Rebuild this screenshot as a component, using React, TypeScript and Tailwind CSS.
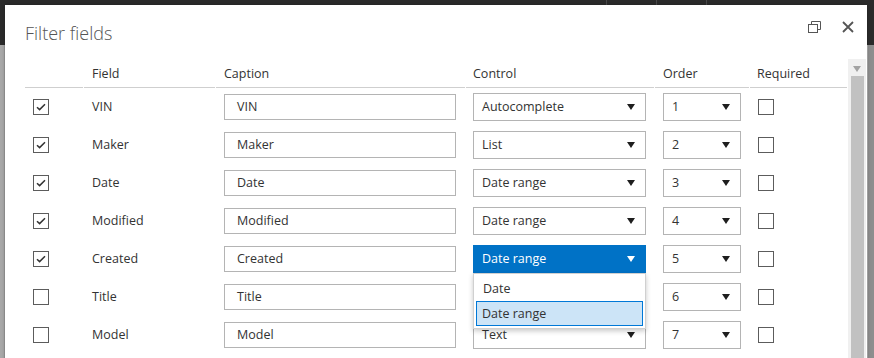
import React from 'react'

interface FieldRow {
  field: string
  control: string
  order: number
  checked: boolean
}

const rows: FieldRow[] = [
  { field: 'VIN', control: 'Autocomplete', order: 1, checked: true },
  { field: 'Maker', control: 'List', order: 2, checked: true },
  { field: 'Date', control: 'Date range', order: 3, checked: true },
  { field: 'Modified', control: 'Date range', order: 4, checked: true },
  { field: 'Created', control: 'Date range', order: 5, checked: true },
  // control of Title sits under the open dropdown
  { field: 'Title', control: '', order: 6, checked: false },
  { field: 'Model', control: 'Text', order: 7, checked: false },
]

function Checkbox({ checked }: { checked: boolean }) {
  return (
    <span className="flex h-4 w-4 shrink-0 border border-[#5c5c5c] bg-white">
      {checked && (
        <svg viewBox="0 0 14 14" className="h-[14px] w-[14px]">
          <path d="M3 7.2 L5.6 9.6 L11 4.2" stroke="#333" strokeWidth="1.5" fill="none" />
        </svg>
      )}
    </span>
  )
}

function Arrow({ color }: { color: string }) {
  return (
    <svg width="8" height="6" viewBox="0 0 8 6">
      <path d="M0 0 H8 L4 6 Z" fill={color} />
    </svg>
  )
}

function Select({ value, active, width }: { value: string; active?: boolean; width: string }) {
  return (
    <div
      className={
        active
          ? `flex h-[28px] ${width} items-center justify-between bg-[#0072c6] pl-[9px] pr-[11px] text-white`
          : `flex h-[28px] ${width} items-center justify-between border border-[#b4b4b4] bg-white pl-2 pr-[10px] text-[#333]`
      }
    >
      <span className="pt-px">{value}</span>
      <Arrow color={active ? '#ffffff' : '#1e1e1e'} />
    </div>
  )
}

export default function App() {
  return (
    <div
      className="relative h-[358px] w-[874px] overflow-hidden bg-[#a9a9a9] text-[12.5px]"
      style={{ fontFamily: '"Open Sans", "Noto Sans", sans-serif' }}
    >
      {/* page behind the dialog */}
      <div className="flex h-[45px] bg-[#2b2b2b]">
        <div className="w-[607px] border-r border-[#4a4a4a]" />
        <div className="w-[50px] border-r border-[#4a4a4a]" />
        <div className="w-[50px] border-r border-[#4a4a4a]" />
      </div>
      <div className="flex h-[313px] justify-between">
        <div className="w-[5px] border-r border-[#999]" />
        <div className="w-[7px] border-l border-[#b0b0b0] bg-[#8e8e8e]" />
      </div>

      {/* dialog */}
      <div className="absolute left-[5px] top-[5px] h-[400px] w-[862px] bg-white shadow-[0_0_4px_rgba(0,0,0,0.25)]">
        <div className="flex h-[55px] items-start justify-between pl-5 pr-[13px]">
          <h1 className="pt-[16px] text-[18px] font-light leading-6 text-[#555]">Filter fields</h1>
          <div className="flex items-center gap-[21px] pt-[16px]">
            <svg width="13" height="12" viewBox="0 0 13 12">
              <rect x="0.5" y="3.5" width="9" height="8" fill="none" stroke="#555" />
              <path d="M3.5 3.5 V0.5 H12.5 V8.5 H9.5" fill="none" stroke="#555" />
            </svg>
            <svg width="12" height="12" viewBox="0 0 12 12">
              <path d="M1 1 L11 11 M11 1 L1 11" stroke="#555" strokeWidth="1.8" />
            </svg>
          </div>
        </div>

        <div className="flex items-start pl-5">
          <div className="w-[822px]">
            {/* header */}
            <div className="flex h-[28px] gap-px pt-px text-[#333]">
              <div className="w-[58px] border-b border-[#cfcfcf]" />
              <div className="flex w-[131px] items-center border-b border-[#cfcfcf] pl-2">Field</div>
              <div className="flex w-[249px] items-center border-b border-[#cfcfcf] pl-2">Caption</div>
              <div className="flex w-[188px] items-center border-b border-[#cfcfcf] pl-[7px]">Control</div>
              <div className="flex w-[94px] items-center border-b border-[#cfcfcf] pl-2">Order</div>
              <div className="flex w-[97px] items-center border-b border-[#cfcfcf] pl-[7px]">Required</div>
            </div>

            {rows.map((row, i) => (
              <div key={row.field} className="flex h-[38px] gap-px pt-[5px] text-[#333]">
                <div className="flex h-[28px] w-[58px] items-center pl-2">
                  <Checkbox checked={row.checked} />
                </div>
                <div className="flex h-[28px] w-[131px] items-center pl-2 pt-px">{row.field}</div>
                <div className="flex h-[28px] w-[249px] items-center pl-2">
                  <div className="flex h-[26px] w-[232px] items-center border border-[#b4b4b4] pl-3 pt-px">
                    {row.field}
                  </div>
                </div>
                <div className="relative h-[28px] w-[188px] pl-[7px]">
                  <Select value={row.control} active={i === 4} width="w-[173px]" />
                  {i === 4 && (
                    <div className="absolute left-[7px] top-[28px] z-10 w-[173px] border border-[#d0d0d0] bg-white p-[2px] shadow-[0_2px_5px_rgba(0,0,0,0.22)]">
                      <div className="flex h-[25px] items-center pl-[7px] pt-px">Date</div>
                      <div className="flex h-[25px] items-center border border-[#0078d7] bg-[#cce4f7] pl-[5px] pt-px">
                        Date range
                      </div>
                    </div>
                  )}
                </div>
                <div className="h-[28px] w-[94px] pl-2">
                  <Select value={String(row.order)} width="w-[78px]" />
                </div>
                <div className="flex h-[28px] w-[97px] items-center pl-2">
                  <Checkbox checked={false} />
                </div>
              </div>
            ))}
          </div>

          {/* scrollbar */}
          <div className="-mt-px ml-px flex h-[310px] w-[18px] flex-col items-center bg-[#f0f0f0]">
            <div className="flex h-[17px] items-center justify-center pt-[2px]">
              <Arrow color="#a3a3a3" />
            </div>
            <div className="h-[290px] w-[13px] bg-[#c1c1c1]" />
          </div>
        </div>
      </div>
    </div>
  )
}
